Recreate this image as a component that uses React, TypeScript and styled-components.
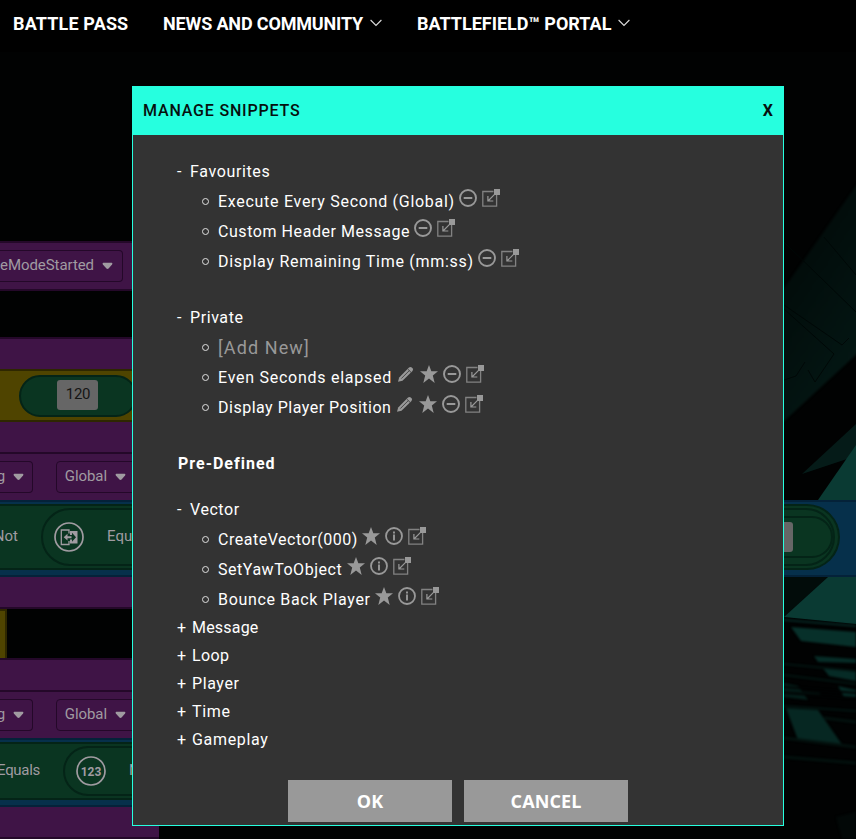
import React from "react";
import styled, { createGlobalStyle } from "styled-components";

const colors = {
  accent: "#26ffdf",
  panel: "#333333",
  icon: "#999999",
  purple: "#3f1446",
  purpleLine: "#240829",
  green: "#0a3521",
  greenLine: "#042417",
  blue: "#06304b",
  blueLine: "#042239",
  yellow: "#4f4400",
  yellowLine: "#2e2700",
  muted: "#a09ba1",
};

const GlobalStyle = createGlobalStyle`
  *, *::before, *::after { box-sizing: border-box; }
  body {
    margin: 0;
    background: #000;
    color: #fff;
    font-family: Roboto, "Liberation Sans", sans-serif;
  }
`;

const Page = styled.div`
  position: relative;
  width: 856px;
  height: 839px;
  overflow: hidden;
  background: #010202;
`;

const NavBar = styled.nav`
  position: relative;
  display: flex;
  height: 52px;
  padding: 0 0 5px 13px;
  background: #000;
`;

const NavItem = styled.a<{ $width: number; $track: number }>`
  display: flex;
  align-items: center;
  width: ${(p) => p.$width}px;
  font-size: 18px;
  font-weight: 700;
  letter-spacing: ${(p) => p.$track}px;
  white-space: nowrap;

  svg {
    margin: -2px 0 0 7px;
  }
`;

const Scenery = styled.svg`
  position: absolute;
  left: 784px;
  top: 52px;
`;

const Workspace = styled.main`
  position: relative;
  display: flex;
  flex-direction: column;
  padding-top: 189px;
`;

type Tone = "purple" | "yellow" | "gap";
const tones: Record<Tone, { bg: string; line: string }> = {
  purple: { bg: colors.purple, line: colors.purpleLine },
  yellow: { bg: colors.yellow, line: colors.yellowLine },
  gap: { bg: "transparent", line: "transparent" },
};

const Strip = styled.div<{ $tone: Tone; $height: number; $top?: boolean; $bottom?: boolean }>`
  display: flex;
  align-items: center;
  flex: none;
  width: 159px;
  height: ${(p) => p.$height}px;
  background: ${(p) => tones[p.$tone].bg};
  border: 0 solid ${(p) => tones[p.$tone].line};
  border-top-width: ${(p) => (p.$top ? 2 : 0)}px;
  border-bottom-width: ${(p) => (p.$bottom ? 2 : 0)}px;
`;

const YellowStub = styled.div`
  width: 7px;
  height: 49px;
  background: ${colors.yellow};
  border: solid ${colors.yellowLine};
  border-width: 2px 2px 0 0;
`;

const BlueRow = styled.div<{ $width: number; $height: number }>`
  display: flex;
  flex: none;
  width: ${(p) => p.$width}px;
  height: ${(p) => p.$height}px;
  padding: 2px 0;
  background: ${colors.blue};
  border: solid ${colors.blueLine};
  border-width: 2px 0;
`;

const GreenBlock = styled.div<{ $width: number; $height: number }>`
  display: flex;
  align-items: center;
  width: ${(p) => p.$width}px;
  height: ${(p) => p.$height}px;
  background: ${colors.green};
  border: 2px solid ${colors.greenLine};
  border-left: 0;
  border-radius: 0 34px 34px 0;
`;

const BlockLabel = styled.span<{ $width: number; $track?: number }>`
  flex: none;
  width: ${(p) => p.$width}px;
  display: flex;
  justify-content: flex-end;
  padding-bottom: 2px;
  color: ${colors.muted};
  font-size: 15px;
  letter-spacing: ${(p) => p.$track ?? 0}px;
  white-space: nowrap;
`;

const InnerPill = styled.div<{ $width: number; $height: number; $margin: number; $pad: number }>`
  flex: none;
  display: flex;
  align-items: center;
  width: ${(p) => p.$width}px;
  height: ${(p) => p.$height}px;
  margin-left: ${(p) => p.$margin}px;
  padding-left: ${(p) => p.$pad}px;
  border: 2px solid ${colors.greenLine};
  border-radius: 40px;
  background: ${colors.green};
`;

const InnerText = styled(BlockLabel)`
  justify-content: flex-start;
  margin-left: 23px;
`;

const NestedPill = styled.div`
  display: flex;
  align-items: center;
  justify-content: flex-end;
  width: 150px;
  height: 42px;
  margin-left: auto;
  padding-right: 38px;
  border: 2px solid ${colors.greenLine};
  border-radius: 21px;
`;

const Value = styled.span<{ $width: number }>`
  display: flex;
  align-items: center;
  justify-content: center;
  width: ${(p) => p.$width}px;
  height: 30px;
  margin-top: -1px;
  padding-bottom: 3px;
  padding-left: 1px;
  border-radius: 3px;
  background: #666;
  color: #151515;
  font-size: 15px;
  letter-spacing: -0.3px;
`;

const Select = styled.div<{ $width: number; $margin: number; $pad: number; $open?: boolean }>`
  flex: none;
  display: flex;
  align-items: center;
  gap: 8px;
  justify-content: flex-end;
  width: ${(p) => p.$width}px;
  height: 32px;
  margin-left: ${(p) => p.$margin}px;
  padding: 0 ${(p) => p.$pad}px 2px 0;
  border: 1px solid ${colors.purpleLine};
  border-left-width: ${(p) => (p.$open ? 0 : 1)}px;
  border-radius: ${(p) => (p.$open ? "0 4px 4px 0" : "4px")};
  color: ${colors.muted};
  font-size: 15px;
  letter-spacing: -0.07px;
  white-space: nowrap;

  svg {
    flex: none;
    margin-top: 2px;
  }
`;

const Dialog = styled.section`
  position: absolute;
  left: 132px;
  top: 86px;
  display: flex;
  flex-direction: column;
  width: 652px;
  height: 740px;
  border: 1px solid ${colors.accent};
  background: ${colors.panel};
`;

const DialogHeader = styled.header`
  display: flex;
  align-items: center;
  justify-content: space-between;
  flex: none;
  height: 48px;
  padding: 0 10px 2px 10px;
  background: ${colors.accent};
  color: #06100e;
  font-size: 16px;
  font-weight: 500;
  letter-spacing: 0.82px;
`;

const Close = styled.span`
  font-weight: 700;
  font-size: 16px;
  letter-spacing: 0;
`;

const Tree = styled.div`
  display: flex;
  flex-direction: column;
  height: 645px;
  padding: 22px 0 0 44px;
`;

const Group = styled.div<{ $after: number }>`
  margin-bottom: ${(p) => p.$after}px;
`;

const GroupTitle = styled.div<{ $track: number; $open?: boolean }>`
  display: flex;
  align-items: center;
  height: 28px;
  margin-bottom: ${(p) => (p.$open ? 1 : 0)}px;
  padding-top: 1px;
  font-size: 16px;
  letter-spacing: ${(p) => p.$track}px;
`;

const Toggle = styled.span<{ $open?: boolean }>`
  flex: none;
  width: ${(p) => (p.$open ? 13 : 15)}px;
  letter-spacing: 0;
`;

const Heading = styled.div`
  display: flex;
  align-items: center;
  height: 30px;
  margin-bottom: 17px;
  padding-left: 1px;
  font-size: 16px;
  font-weight: 700;
  letter-spacing: 1px;
`;

const Item = styled.div`
  display: flex;
  align-items: center;
  height: 30px;
  padding-left: 24px;

  &::before {
    content: "";
    width: 7px;
    height: 7px;
    margin: 1px 9px 0 1px;
    border: 1px solid #e0e0e0;
    border-radius: 50%;
  }
`;

const ItemLabel = styled.span<{ $width: number; $track: number; $muted?: boolean }>`
  width: ${(p) => p.$width}px;
  margin-left: -1px;
  padding-left: 1px;
  font-size: ${(p) => (p.$muted ? 18 : 16)}px;
  color: ${(p) => (p.$muted ? colors.icon : "#fff")};
  letter-spacing: ${(p) => p.$track}px;
  white-space: nowrap;
`;

const Actions = styled.span`
  display: flex;
  gap: 5px;
  margin-top: -6px;
  color: ${colors.icon};
`;

const Footer = styled.footer`
  display: flex;
  gap: 12px;
  padding-left: 155px;
`;

const Button = styled.button`
  width: 164px;
  height: 42px;
  padding: 0;
  border: 0;
  background: #999;
  color: #fff;
  font: 700 18px "Open Sans", sans-serif;
  letter-spacing: 0.1px;
`;

const Chevron = () => (
  <svg width="12" height="8" viewBox="0 0 12 8" fill="none" stroke="#ddd" strokeWidth="1.1">
    <path d="M.6 1 6 6.5 11.4 1" />
  </svg>
);

const Caret = () => (
  <svg width="11" height="8" viewBox="0 0 11 8" fill={colors.muted}>
    <path d="M1.2.8h8.6q1.2.5.3 1.6L6.8 6.3q-1.3 1.3-2.6 0L.9 2.4Q0 1.3 1.2.8Z" />
  </svg>
);

type IconName = "edit" | "star" | "remove" | "info" | "export";

const Icon = ({ name }: { name: IconName }) => (
  <svg width="18" height="18" viewBox="0 0 18 18" fill="none" stroke="currentColor">
    {name === "remove" && (
      <>
        <circle cx="9" cy="9" r="8" strokeWidth="1.9" />
        <path d="M4.700 9h8.600" strokeWidth="2" />
      </>
    )}
    {name === "info" && (
      <>
        <circle cx="9" cy="9" r="8" strokeWidth="1.8" />
        <path d="M9 7.600v5.800M9 4.500v1.900" strokeWidth="1.9" />
      </>
    )}
    {name === "star" && (
      <path
        d="M9 0l2.350 6.350H18l-5.200 4.200L14.700 18 9 13.600 3.300 18l1.900-7.450L0 6.350h6.650Z"
        fill="currentColor"
        stroke="none"
      />
    )}
    {name === "export" && (
      <>
        <path d="M11.500 2.500H.8v14.700h13.800V6" stroke="#828282" strokeWidth="1.300" />
        <path d="M12.800 5.200 6 12M5.900 6.900V12h5.400" strokeWidth="1.200" />
        <path d="M12 0h6v6h-6Z" fill="currentColor" stroke="none" />
      </>
    )}
    {name === "edit" && (
      <>
        <path
          d="M1 16.800 2.200 12.400 12 2.600q1.400-1.200 2.800 0l.7.700q1.200 1.400 0 2.600L5.500 15.700Z"
          fill="currentColor"
          stroke="none"
        />
        <path d="M4.300 13.600 12.300 5.600M10.700 4l3.300 3.300" stroke={colors.panel} strokeWidth=".8" />
      </>
    )}
  </svg>
);

const NumberBadge = () => (
  <svg width="30" height="30" viewBox="0 0 30 30" fill="none" stroke={colors.muted}>
    <circle cx="15" cy="15" r="14" strokeWidth="1.7" />
    <text x="15" y="19.500" textAnchor="middle" fill={colors.muted} stroke="none" fontSize="12" fontWeight="700" fontFamily="Roboto">
      123
    </text>
  </svg>
);

const CompareBadge = () => (
  <svg width="30" height="30" viewBox="0 0 30 30" fill="none" stroke={colors.muted}>
    <circle cx="15" cy="15" r="14" strokeWidth="1.7" />
    <path d="M15 11.500V8H7.300v14.500H15V19" strokeWidth="1.300" />
    <path d="M16 9h7.500v12.500H16v-4h2v2.200l4-4.500-4-4.400V13h-2Z" fill={colors.muted} stroke="none" />
    <path d="M9.700 15.200 13.500 11.800v2.400h4v2h-4v2.400Z" fill={colors.muted} stroke="none" />
  </svg>
);

const Backdrop = () => (
  <Scenery width="72" height="787" viewBox="784 52 72 787">
    <defs>
      <linearGradient id="haze" x1="0" y1="0" x2=".5" y2="1">
        <stop offset="0" stopColor="#010605" />
        <stop offset="1" stopColor="#041714" />
      </linearGradient>
      <filter id="soft" x="-20%" y="-20%" width="140%" height="140%" colorInterpolationFilters="sRGB">
        <feGaussianBlur stdDeviation="0.8" />
      </filter>
    </defs>
    <path d="M780 294 860 180V351L780 425Z" fill="url(#haze)" filter="url(#soft)" />
    <path
      d="M784 242 856 312M824 237l32 38M784 305l58 40 7-7M784 309l50 45-19 28-7-12M784 380l12-4 9-14"
      fill="none"
      stroke="#010807"
    />
    <path d="M802 474 856 424V456Z" fill="#051b18" />
    <path d="M856 445 818 500h38Z" fill="#0a3a33" />
    <path d="M784 577h44l-44 40Z" fill="#020c0a" />
    <path d="M828 577h28v47l-72-7Z" fill="#0a3a33" />
    <g filter="url(#soft)">
      <path d="M784 620 856 626" stroke="#062622" strokeWidth="2" />
      <path d="M791 627 856 632V647L801 641Z" fill="#07302a" />
      <path d="M814 656 856 659V663L818 662Z" fill="#062b26" />
      <path d="M822 667 856 672V681L829 676Z" fill="#062b26" />
      <path d="M838 686 856 690V698L844 697Z" fill="#062b26" />
      <path d="M784 683 798 686 808 700 784 697Z" fill="#041e1a" />
      <path d="M784 664 856 671M784 675 856 684M784 691 820 694M784 706 856 711" stroke="#031411" strokeWidth="2" />
      <path d="M784 687 856 693M784 693 856 698" stroke="#010303" strokeWidth="2" />
      <path d="M786 708 818 710 843 746 798 740Z" fill="#062722" />
      <path d="M824 718 856 722M784 738 856 747M784 757 856 763" stroke="#03110e" strokeWidth="3" />
      <path d="M836 817 856 812V839H842Z" fill="#020807" />
    </g>
  </Scenery>
);

interface Snippet {
  label: string;
  width: number;
  track: number;
  icons: IconName[];
}

const favourites: Snippet[] = [
  { label: "Execute Every Second (Global)", width: 242, track: 0.71, icons: ["remove", "export"] },
  { label: "Custom Header Message", width: 197, track: 0.56, icons: ["remove", "export"] },
  { label: "Display Remaining Time (mm:ss)", width: 261, track: 0.72, icons: ["remove", "export"] },
];

const privates: Snippet[] = [
  { label: "Even Seconds elapsed", width: 180, track: 0.74, icons: ["edit", "star", "remove", "export"] },
  { label: "Display Player Position", width: 179, track: 0.5, icons: ["edit", "star", "remove", "export"] },
];

const vectors: Snippet[] = [
  { label: "CreateVector(000)", width: 145, track: 0.52, icons: ["star", "info", "export"] },
  { label: "SetYawToObject", width: 130, track: 0.53, icons: ["star", "info", "export"] },
  { label: "Bounce Back Player", width: 158, track: 0.67, icons: ["star", "info", "export"] },
];

const collapsed = [
  { label: "Message", track: 0.2 },
  { label: "Loop", track: 0.4 },
  { label: "Player", track: 0.6 },
  { label: "Time", track: 0.7 },
  { label: "Gameplay", track: 0.67 },
];

const SnippetList = ({ items }: { items: Snippet[] }) => (
  <>
    {items.map((s) => (
      <Item key={s.label}>
        <ItemLabel $width={s.width} $track={s.track}>
          {s.label}
        </ItemLabel>
        <Actions>
          {s.icons.map((name) => (
            <Icon key={name} name={name} />
          ))}
        </Actions>
      </Item>
    ))}
  </>
);

const VariableStrip = () => (
  <Strip $tone="purple" $height={46}>
    <Select $width={33} $margin={0} $pad={8} $open>
      g <Caret />
    </Select>
    <Select $width={90} $margin={23} $pad={19}>
      Global <Caret />
    </Select>
  </Strip>
);

export default function App() {
  return (
    <Page>
      <GlobalStyle />
      <Backdrop />
      <NavBar>
        <NavItem $width={150} $track={0.15}>BATTLE PASS</NavItem>
        <NavItem $width={254} $track={-0.15}>
          NEWS AND COMMUNITY <Chevron />
        </NavItem>
        <NavItem $width={230} $track={0}>
          BATTLEFIELD™ PORTAL <Chevron />
        </NavItem>
      </NavBar>

      <Workspace>
        <Strip $tone="purple" $height={50} $top $bottom>
          <Select $width={123} $margin={0} $pad={9} $open>
            eModeStarted <Caret />
          </Select>
        </Strip>
        <Strip $tone="gap" $height={46} />
        <Strip $tone="purple" $height={32} $top />
        <Strip $tone="yellow" $height={53} $top $bottom>
          <InnerPill $width={118} $height={42} $margin={19} $pad={36}>
            <Value $width={41}>120</Value>
          </InnerPill>
        </Strip>
        <Strip $tone="purple" $height={32} $bottom />
        <VariableStrip />
        <BlueRow $width={856} $height={77}>
          <GreenBlock $width={840} $height={66}>
            <BlockLabel $width={18}>Not</BlockLabel>
            <InnerPill $width={794} $height={58} $margin={23} $pad={11}>
              <CompareBadge />
              <InnerText $width={50}>Equals</InnerText>
              <NestedPill>
                <Value $width={41}>0</Value>
              </NestedPill>
            </InnerPill>
          </GreenBlock>
        </BlueRow>
        <Strip $tone="purple" $height={32} $bottom />
        <Strip $tone="gap" $height={49}>
          <YellowStub />
        </Strip>
        <Strip $tone="purple" $height={34} $top $bottom />
        <VariableStrip />
        <BlueRow $width={159} $height={69}>
          <GreenBlock $width={400} $height={58}>
            <BlockLabel $width={40} $track={-0.3}>Equals</BlockLabel>
            <InnerPill $width={300} $height={50} $margin={23} $pad={11}>
              <NumberBadge />
              <InnerText $width={70}>Number</InnerText>
            </InnerPill>
          </GreenBlock>
        </BlueRow>
        <Strip $tone="purple" $height={32} $bottom />
      </Workspace>

      <Dialog>
        <DialogHeader>
          MANAGE SNIPPETS
          <Close>X</Close>
        </DialogHeader>
        <Tree>
          <Group $after={27}>
            <GroupTitle $track={0.63} $open>
              <Toggle $open>-</Toggle>Favourites
            </GroupTitle>
            <SnippetList items={favourites} />
          </Group>
          <Group $after={26}>
            <GroupTitle $track={0.58} $open>
              <Toggle $open>-</Toggle>Private
            </GroupTitle>
            <Item>
              <ItemLabel $width={100} $track={1.1} $muted>
                [Add New]
              </ItemLabel>
            </Item>
            <SnippetList items={privates} />
          </Group>
          <Heading>Pre-Defined</Heading>
          <Group $after={-1}>
            <GroupTitle $track={0.55} $open>
              <Toggle $open>-</Toggle>Vector
            </GroupTitle>
            <SnippetList items={vectors} />
          </Group>
          {collapsed.map((g) => (
            <GroupTitle key={g.label} $track={g.track}>
              <Toggle>+</Toggle>
              {g.label}
            </GroupTitle>
          ))}
        </Tree>
        <Footer>
          <Button>OK</Button>
          <Button>CANCEL</Button>
        </Footer>
      </Dialog>
    </Page>
  );
}
